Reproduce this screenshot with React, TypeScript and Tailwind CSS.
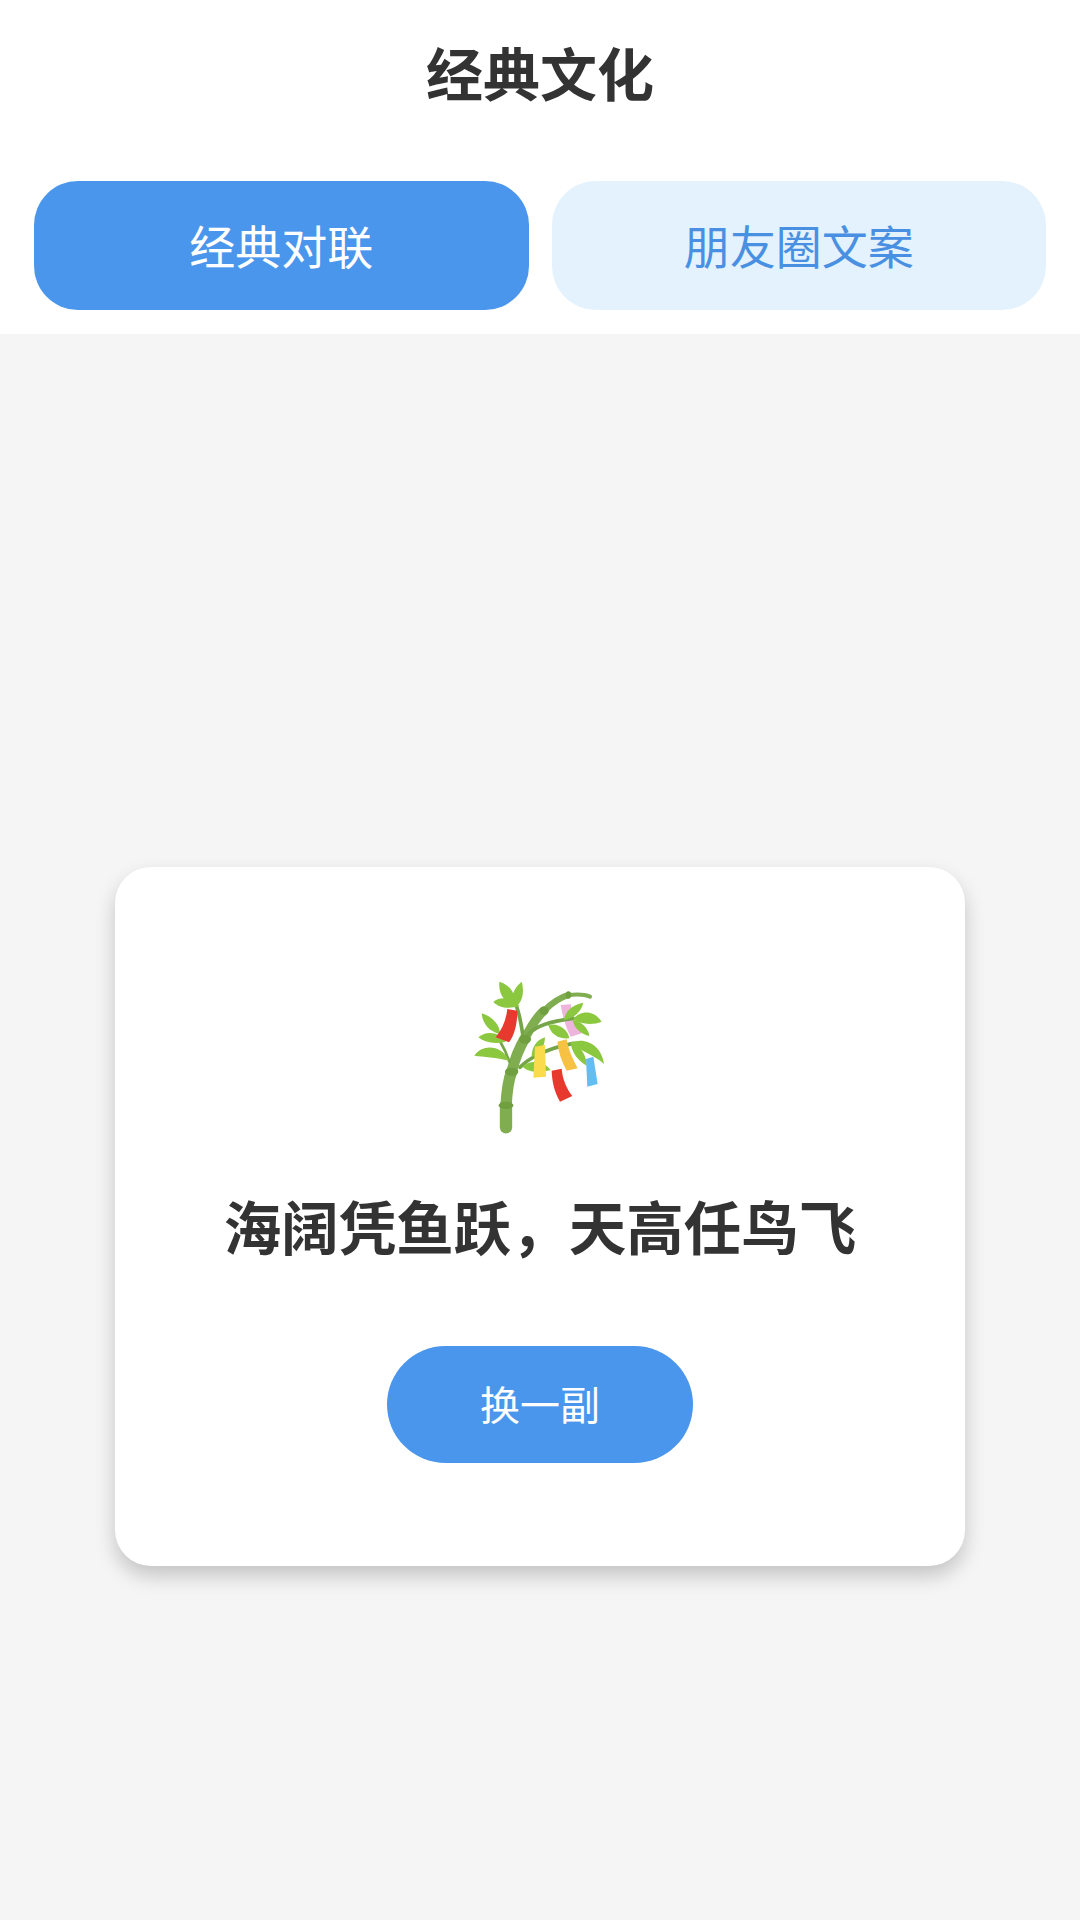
import React from 'react';

const BambooIcon: React.FC = () => (
  <svg width="200" height="190" viewBox="0 0 600 570" fill="none" className="blur-[0.4px]">
    {/* tag behind the branches */}
    <path d="M362 135L392 133L402 175L426 220L392 230C378 205 368 170 362 135Z" fill="#EDB4DC" />
    {/* stalk */}
    <g stroke="#7FAD50" strokeLinecap="round">
      <path d="M198 502L198 435" strokeWidth="37" />
      <path d="M198 440C200 400 205 360 215 335" strokeWidth="34" />
      <path d="M215 335C225 295 240 260 255 235" strokeWidth="32" />
      <path d="M255 235C275 195 290 170 312 152" strokeWidth="27" />
      <path d="M312 152C335 130 360 112 385 105" strokeWidth="19" />
      <path d="M385 105C410 102 435 103 450 110" strokeWidth="12" />
    </g>
    {/* branches */}
    <g stroke="#75A547" strokeLinecap="round">
      <path d="M250 235C245 200 240 165 228 135" strokeWidth="11" />
      <path d="M208 305C200 280 190 260 178 240" strokeWidth="8" />
      <path d="M262 225C290 195 330 185 400 175" strokeWidth="11" />
      <path d="M240 322C265 295 320 265 400 250" strokeWidth="11" />
    </g>
    {/* leaves */}
    <g fill="#8BC83F">
      <path d="M178 65C212 75 230 105 222 135C190 125 175 100 178 65Z" />
      <path d="M245 65C255 100 245 130 225 142C207 115 220 85 245 65Z" />
      <path d="M160 125C185 107 220 114 238 138C205 148 175 143 160 125Z" />
      <path d="M125 160C158 170 180 195 180 222C148 215 128 192 125 160Z" />
      <path d="M115 232C140 210 180 217 197 245C165 253 135 248 115 232Z" />
      <path d="M103 287C125 252 185 252 207 302C170 293 130 290 103 287Z" />
      <path d="M430 128C395 134 375 155 372 180C405 173 423 155 430 128Z" />
      <path d="M485 185C460 148 420 152 398 178C425 195 460 195 485 185Z" />
      <path d="M448 228C445 202 420 182 398 180C402 206 425 223 448 228Z" />
      <path d="M325 195C355 187 385 210 388 235C355 238 332 222 325 195Z" />
      <path d="M315 232C290 240 274 262 275 292C303 278 314 258 315 232Z" />
      <path d="M248 320C270 297 312 304 332 330C300 338 265 338 248 320Z" />
      <path d="M390 250C435 228 485 257 492 312C460 283 420 273 390 250Z" />
      <path d="M392 250C425 257 440 290 440 317C414 303 397 280 392 250Z" />
    </g>
    {/* stalk joints */}
    <g fill="#6F9F3F">
      <ellipse cx="198" cy="436" rx="22" ry="11" />
      <ellipse cx="215" cy="335" rx="20" ry="12" />
      <ellipse cx="255" cy="238" rx="18" ry="13" />
      <ellipse cx="312" cy="152" rx="14" ry="12" />
      <ellipse cx="385" cy="105" rx="8" ry="11" />
    </g>
    {/* paper tags */}
    <path d="M202 147L232 152C232 190 224 225 207 247L167 232C187 208 198 180 202 147Z" fill="#E8392E" />
    <path d="M285 260L315 255L318 350L280 353Z" fill="#FADB4B" />
    <path d="M352 245L380 238C385 270 400 300 413 325L380 332C365 305 355 275 352 245Z" fill="#F7C244" />
    <path d="M335 332L365 326C368 360 380 385 397 408L360 425C343 395 336 365 335 332Z" fill="#E8392E" />
    <path d="M438 297L460 290L473 372L442 380Z" fill="#63BDF2" />
  </svg>
);

const App: React.FC = () => {
  return (
    <div className="w-[1080px] h-[1920px] flex flex-col bg-[#f5f5f5] font-['Noto_Sans_CJK_SC','Noto_Sans',sans-serif]">
      <div className="bg-white h-[334px] flex flex-col items-center">
        <h1 className="mt-[29px] h-[84px] text-[57px] leading-[84px] font-bold text-[#333333]">经典文化</h1>
        <div className="mt-[68px] w-full px-[34px] flex gap-[23px]">
          <button className="flex-1 h-[129px] rounded-[44px] bg-[#4a96ec] text-white text-[46px] pb-[3px]">经典对联</button>
          <button className="flex-1 h-[129px] rounded-[44px] bg-[#e3f2fd] text-[#4a90e2] text-[46px] pb-[3px]">朋友圈文案</button>
        </div>
      </div>
      <div className="flex-1 flex justify-center pt-[533px]">
        <div className="w-[850px] h-[699px] bg-white rounded-[36px] shadow-[0_10px_20px_rgba(0,0,0,0.2)] flex flex-col items-center pt-[93px]">
          <BambooIcon />
          <p className="mt-[33px] mb-[3px] text-[57.5px] leading-[84px] font-bold text-[#333333] whitespace-nowrap">海阔凭鱼跃，天高任鸟飞</p>
          <button className="mt-[76px] w-[306px] h-[117px] rounded-full bg-[#4a96ec] text-white text-[40px] pb-[3px]">换一副</button>
        </div>
      </div>
    </div>
  );
};

export default App;
